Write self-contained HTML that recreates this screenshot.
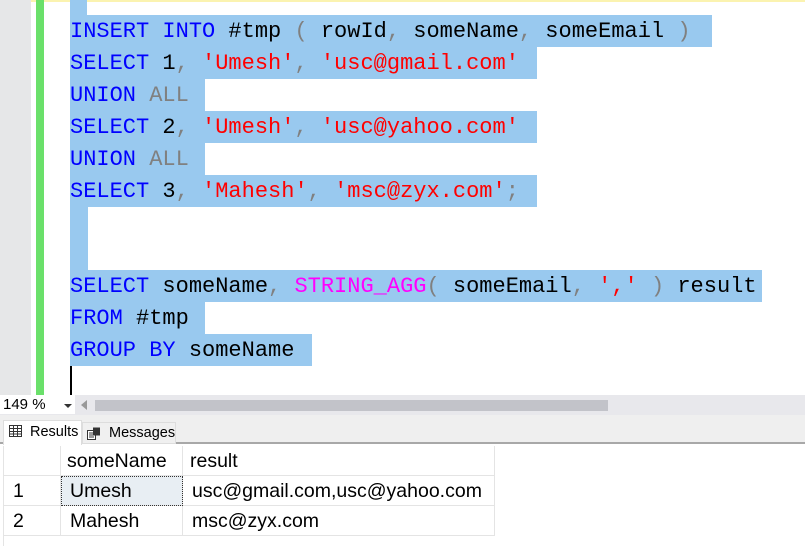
<!DOCTYPE html>
<html><head><style>
*{margin:0;padding:0;box-sizing:border-box}
body{width:805px;height:546px;overflow:hidden;background:#fff;position:relative;font-family:"Liberation Sans",sans-serif}
.a{position:absolute}
.ln{position:absolute;left:70px;height:32px;background:#99c9ef;font-family:"Liberation Mono",monospace;font-size:22px;line-height:34px;white-space:pre;color:#000}
.k{color:#0000ff}.s{color:#ff0000}.g{color:#808080}.f{color:#ff00ff}
.cell{position:absolute;font-size:19.5px;line-height:30px;border-right:1px solid #e4e4e4;border-bottom:1px solid #e4e4e4}
</style></head><body>
<div class="a" style="left:0;top:0;width:805px;height:2px;background:#fbf3b0"></div>
<div class="a" style="left:0;top:0;width:31px;height:395px;background:#e6e7e8"></div>
<div class="a" style="left:36px;top:0;width:8px;height:395px;background:#6ae06a"></div>
<div class="ln" style="top:-17px;width:17px"></div>
<div class="ln" style="top:15px;width:642px"><span class="k">INSERT INTO</span> #tmp <span class="g">(</span> rowId<span class="g">,</span> someName<span class="g">,</span> someEmail <span class="g">)</span></div>
<div class="ln" style="top:47px;width:467px"><span class="k">SELECT</span> 1<span class="g">,</span> <span class="s">'Umesh'</span><span class="g">,</span> <span class="s">'usc@gmail.com'</span></div>
<div class="ln" style="top:79px;width:135px"><span class="k">UNION</span> <span class="g">ALL</span></div>
<div class="ln" style="top:111px;width:467px"><span class="k">SELECT</span> 2<span class="g">,</span> <span class="s">'Umesh'</span><span class="g">,</span> <span class="s">'usc@yahoo.com'</span></div>
<div class="ln" style="top:143px;width:135px"><span class="k">UNION</span> <span class="g">ALL</span></div>
<div class="ln" style="top:175px;width:467px"><span class="k">SELECT</span> 3<span class="g">,</span> <span class="s">'Mahesh'</span><span class="g">,</span> <span class="s">'msc@zyx.com'</span><span class="g">;</span></div>
<div class="ln" style="top:207px;width:18px"></div>
<div class="ln" style="top:239px;width:18px"></div>
<div class="ln" style="top:270px;width:692px"><span class="k">SELECT</span> someName<span class="g">,</span> <span class="f">STRING_AGG</span><span class="g">(</span> someEmail<span class="g">,</span> <span class="s">','</span> <span class="g">)</span> result</div>
<div class="ln" style="top:302px;width:135px"><span class="k">FROM</span> #tmp</div>
<div class="ln" style="top:334px;width:242px"><span class="k">GROUP BY</span> someName</div>
<div class="a" style="left:70px;top:366px;width:2px;height:29px;background:#000"></div>
<div class="a" style="left:0;top:395px;width:805px;height:20px;background:#e8e8ec"></div>
<div class="a" style="left:0;top:395px;width:75px;height:19px;background:#fff;font-size:15px;line-height:19px;padding-left:3px">149 %</div>
<div class="a" style="left:64px;top:404px;width:0;height:0;border-left:4px solid transparent;border-right:4px solid transparent;border-top:4px solid #333"></div>
<div class="a" style="left:81px;top:400px;width:0;height:0;border-top:5px solid transparent;border-bottom:5px solid transparent;border-right:6px solid #999"></div>
<div class="a" style="left:95px;top:400px;width:513px;height:11px;background:#c2c3c9"></div>
<div class="a" style="left:0;top:415px;width:805px;height:29px;background:#efefef;border-bottom:2px solid #a8a8a8"></div>
<div class="a" style="left:3px;top:420px;width:79px;height:25px;background:#fff;border:1px solid #ddd;border-bottom:none;font-size:14.5px;line-height:22px;padding-left:26px">Results</div>
<svg class="a" style="left:9px;top:425px" width="13" height="12"><rect x=".5" y=".5" width="12" height="11" fill="none" stroke="#333"/><path d="M0 3.5H13M0 6.5H13M0 9H13M4.5 0V12M8.5 0V12" stroke="#333"/></svg>
<div class="a" style="left:82px;top:422px;width:94px;height:22px;background:#f0f0f0;border:1px solid #ddd;font-size:14.5px;line-height:21px;padding-left:26px">Messages</div>
<svg class="a" style="left:87px;top:427px" width="14" height="13"><rect x=".5" y="3.5" width="8" height="9" fill="#fff" stroke="#333"/><rect x="6" y=".5" width="7" height="8" fill="#333"/><path d="M2 6H7M2 8H7M2 10H7" stroke="#333"/></svg>
<div class="a" style="left:3px;top:446px;width:492px;height:100px;border-left:1px solid #e4e4e4"></div>
<div class="cell" style="left:4px;top:446px;width:57px;height:30px"></div>
<div class="cell" style="left:61px;top:446px;width:122px;height:30px;padding-left:6px">someName</div>
<div class="cell" style="left:183px;top:446px;width:312px;height:30px;padding-left:7px">result</div>
<div class="cell" style="left:4px;top:476px;width:57px;height:30px;padding-left:9px">1</div>
<div class="cell" style="left:61px;top:476px;width:122px;height:30px;padding-left:9px;background:#e8eef3;outline:1px dotted #333;outline-offset:-1px">Umesh</div>
<div class="cell" style="left:183px;top:476px;width:312px;height:30px;padding-left:9px">usc@gmail.com,usc@yahoo.com</div>
<div class="cell" style="left:4px;top:506px;width:57px;height:30px;padding-left:9px">2</div>
<div class="cell" style="left:61px;top:506px;width:122px;height:30px;padding-left:9px">Mahesh</div>
<div class="cell" style="left:183px;top:506px;width:312px;height:30px;padding-left:9px">msc@zyx.com</div>
</body></html>
